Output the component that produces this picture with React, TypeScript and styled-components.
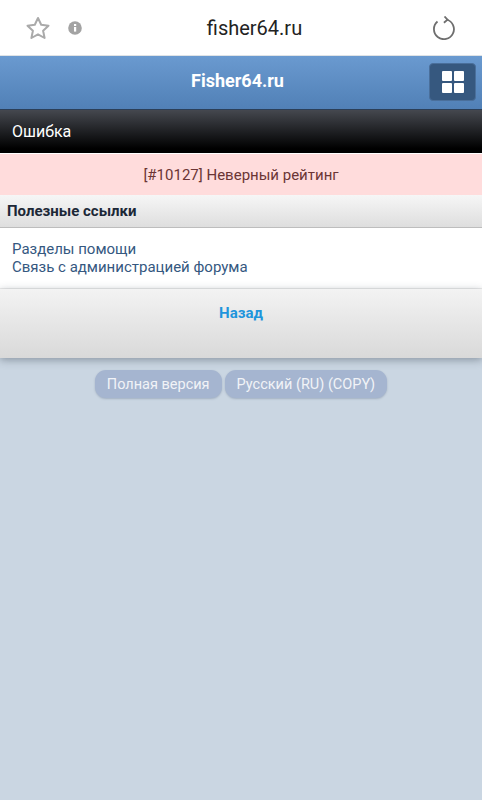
import React from "react";
import styled, { createGlobalStyle } from "styled-components";

const GlobalStyle = createGlobalStyle`
  html, body {
    margin: 0;
    padding: 0;
    min-height: 100vh;
    background: #cad6e2;
    font-family: Roboto, "Liberation Sans", sans-serif;
  }
  * {
    box-sizing: border-box;
  }
`;

const BrowserBar = styled.div`
  height: 56px;
  background: #fff;
  border-bottom: 1px solid #dfe3e6;
  display: flex;
  align-items: center;
  padding: 0 26px 0 25px;
`;
const BarLeft = styled.div`
  width: 60px;
  display: flex;
  align-items: center;
  gap: 17px;
`;
const Address = styled.div`
  flex: 1;
  text-align: center;
  font-size: 20px;
  color: #222;
  padding-right: 8px;
  margin-top: 1px;
`;
const Header = styled.div`
  height: 54px;
  background: linear-gradient(#6a9ad0, #5180b6);
  border-bottom: 1px solid #2b3f58;
  display: grid;
  grid-template-columns: 1fr auto;
  align-items: center;
  padding: 0 6px 0 46px;
`;
const Title = styled.div`
  text-align: center;
  color: #fff;
  font-size: 18px;
  font-weight: 700;
  margin-top: -4px;
`;
const GridButton = styled.div`
  width: 47px;
  height: 38px;
  background: #36587f;
  border: 1px solid #4a6f9b;
  border-radius: 4px;
  margin-top: -1px;
  display: grid;
  grid-template-columns: 10px 10px;
  grid-template-rows: 10px 10px;
  gap: 2px;
  justify-content: center;
  align-content: center;
`;
const GridCell = styled.span`
  background: #fff;
  border-radius: 1px;
`;
const PageBar = styled.div`
  height: 43px;
  background: linear-gradient(#45484f, #000 90%);
  color: #fff;
  font-size: 16px;
  display: flex;
  align-items: center;
  padding: 0 12px;
`;
const ErrorBox = styled.div`
  height: 42px;
  background: #ffdcdc;
  color: #6b3535;
  font-size: 15px;
  display: flex;
  align-items: center;
  justify-content: center;
  border-top: 1px solid #fff;
`;
const SectionTitle = styled.div`
  height: 33px;
  background: linear-gradient(#f6f6f6, #dedede);
  border-bottom: 1px solid #bdbdbd;
  color: #1c2837;
  font-size: 15px;
  font-weight: 700;
  display: flex;
  align-items: center;
  padding: 0 7px;
`;
const Links = styled.div`
  height: 61px;
  background: #fff;
  padding: 12px 12px 0;
  display: flex;
  flex-direction: column;
  border-bottom: 1px solid #ececec;
`;
const LinkRow = styled.a`
  color: #35587f;
  font-size: 15px;
  line-height: 18px;
`;
const BackPanel = styled.div`
  height: 69px;
  background: linear-gradient(#f3f3f3, #d9d9d9);
  box-shadow: 0 2px 8px rgba(60, 70, 85, 0.45);
  text-align: center;
  padding-top: 14px;
`;
const BackLink = styled.a`
  color: #1f95dc;
  font-size: 15px;
  font-weight: 700;
`;
const Footer = styled.div`
  display: flex;
  justify-content: center;
  gap: 3px;
  margin-top: 12px;
  padding-right: 0;
`;
const FooterButton = styled.div`
  height: 28px;
  padding: 0 12px;
  border-radius: 11px;
  background: #a5b5d0;
  box-shadow: 0 1px 2px rgba(90, 105, 135, 0.35);
  color: #f1f3f7;
  font-size: 14.5px;
  display: flex;
  align-items: center;
`;

const StarIcon = () => (
  <svg width="26" height="24" viewBox="0 0 26 24" fill="none" stroke="#aaaaaa" strokeWidth="2" strokeLinejoin="round">
    <path d="M13 2l3.2 6.8 7.3.9-5.4 5 1.5 7.3-6.6-3.7L6.400 22l1.500-7.300-5.400-5 7.300-.9z" />
  </svg>
);

const InfoIcon = () => (
  <svg width="14" height="14" viewBox="0 0 14 14">
    <circle cx="7" cy="7" r="6.800" fill="#a3a3a3" />
    <rect x="6" y="6" width="2.200" height="4.600" fill="#fff" />
    <rect x="6" y="3" width="2.200" height="2" fill="#fff" />
  </svg>
);

const ReloadIcon = () => (
  <svg width="24" height="24" viewBox="0 0 24 24" fill="none" stroke="#6e6e6e" strokeWidth="1.800">
    <path d="M14.500 3.500A10 10 0 1 1 5.500 5.500" />
    <path d="M12.500 0.500l3 3.200-3.600 3" />
  </svg>
);

const App = () => {
  return (
    <>
      <GlobalStyle />
      <BrowserBar>
        <BarLeft>
          <StarIcon />
          <InfoIcon />
        </BarLeft>
        <Address>fisher64.ru</Address>
        <ReloadIcon />
      </BrowserBar>
      <Header>
        <Title>Fisher64.ru</Title>
        <GridButton>
          <GridCell />
          <GridCell />
          <GridCell />
          <GridCell />
        </GridButton>
      </Header>
      <PageBar>Ошибка</PageBar>
      <ErrorBox>[#10127] Неверный рейтинг</ErrorBox>
      <SectionTitle>Полезные ссылки</SectionTitle>
      <Links>
        <LinkRow>Разделы помощи</LinkRow>
        <LinkRow>Связь с администрацией форума</LinkRow>
      </Links>
      <BackPanel>
        <BackLink>Назад</BackLink>
      </BackPanel>
      <Footer>
        <FooterButton>Полная версия</FooterButton>
        <FooterButton>Русский (RU) (COPY)</FooterButton>
      </Footer>
    </>
  );
};

export default App;
